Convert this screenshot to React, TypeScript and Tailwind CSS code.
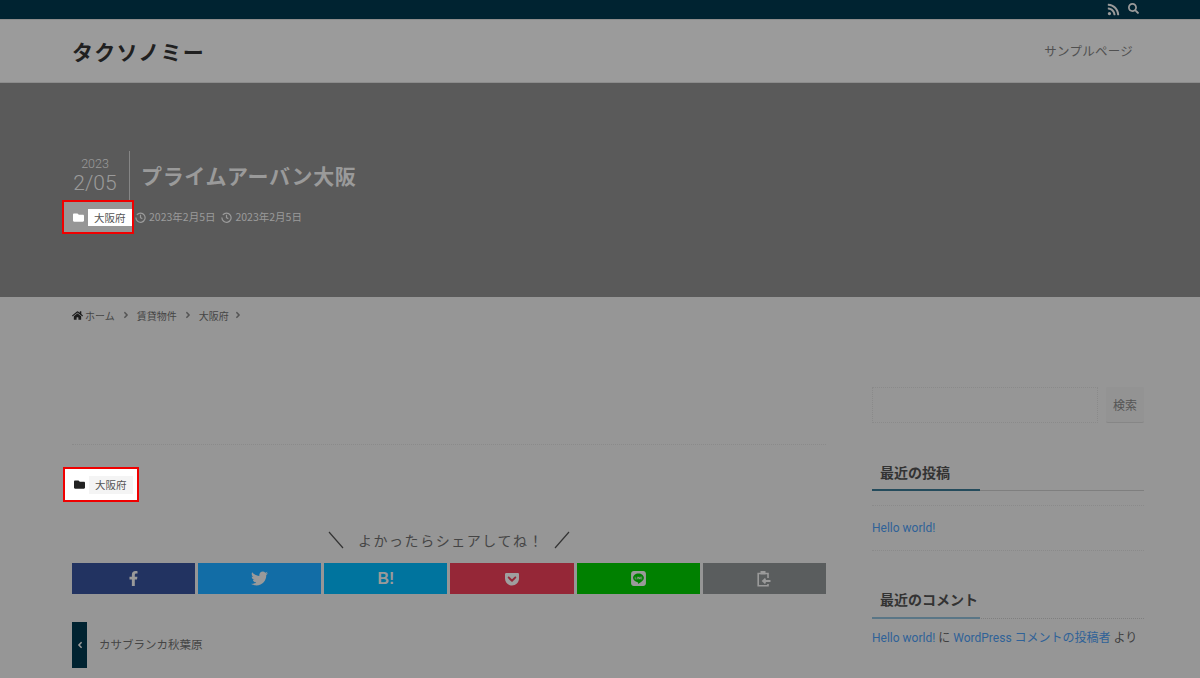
import { FaRss, FaSearch, FaFolder, FaHome, FaFacebookF, FaTwitter, FaGetPocket, FaLine, FaAngleRight, FaAngleLeft } from "react-icons/fa";
import { FiClock } from "react-icons/fi";

const jp = "font-['Noto_Sans_CJK_JP','Noto_Sans',sans-serif]";

function Clock() {
  return (
    <svg width="11" height="11" viewBox="0 0 12 12" fill="none" stroke="currentColor" strokeWidth="1.3">
      <path d="M2 3.2A5 5 0 1 1 1 6" />
      <path d="M6 3v3.2l2 1" />
    </svg>
  );
}

function ClipIcon() {
  return (
    <svg width="14" height="17" viewBox="0 0 14 17" fill="none" stroke="#9a9a9a" strokeWidth="1.6">
      <path d="M11 8V3.5H1.2v12.3H11V14" />
      <rect x="3.5" y="1" width="5" height="3.4" fill="#9a9a9a" stroke="none" />
      <path d="M13.5 11H6.5M8.5 8.6 6 11l2.5 2.4" strokeWidth="1.8" />
    </svg>
  );
}

const social = [
  { bg: "bg-[#223361]", el: <FaFacebookF size={15} color="#9a9a9a" /> },
  { bg: "bg-[#126da6]", el: <FaTwitter size={17} color="#9a9a9a" /> },
  { bg: "bg-[#00749e]", el: <span className="font-['Liberation_Sans',sans-serif] text-[16px] font-bold leading-none text-[#9a9a9a]">B!</span> },
  { bg: "bg-[#952737]", el: <FaGetPocket size={16} color="#9f9f9f" /> },
  { bg: "bg-[#008000]", el: <FaLine size={17} color="#9a9a9a" /> },
  { bg: "bg-[#5a5d5e]", el: <ClipIcon /> },
];

export default function App() {
  return (
    <div className={`${jp} h-[678px] w-[1200px] overflow-hidden bg-[#969696] text-[#3a3a3a]`}>
      <div className="flex h-[19px] items-center justify-end gap-[8px] bg-[#002331] pr-[61px] text-[#9a9a9a]">
        <FaRss size={13} />
        <FaSearch size={11} className="-mt-[3px]" />
      </div>

      <header className="flex h-[64px] items-center justify-between border-y border-[#8c8c8c] bg-[#9b9b9b] pl-[72px] pr-[67px]">
        <div className="text-[21px] font-bold leading-none tracking-[0.06em] text-[#202020]">タクソノミー</div>
        <div className="text-[12.5px] tracking-[0.02em] text-[#505050]">サンプルページ</div>
      </header>

      <section className="h-[214px] bg-[#5a5a5a] pl-[72px] pt-[68px]">
        <div className="flex h-[49px] items-stretch">
          <div className="flex w-[46px] flex-col items-center font-['Roboto',sans-serif] font-light text-[#9a9a9a]">
            <div className="mt-[6px] text-[12.5px] leading-[14px]">2023</div>
            <div className="text-[21px] leading-[24px]">2/05</div>
          </div>
          <div className="ml-[11px] w-px bg-[#858585]" />
          <div className="ml-[11px] pt-[9px] text-[21px] font-bold leading-[30px] tracking-[0.03em] text-[#9a9a9a]">プライムアーバン大阪</div>
        </div>
        <div className="flex h-[34px] items-center">
          <div className="-ml-[10px] flex h-[34px] w-[72px] items-center border-2 border-[#f00000] bg-[#969696] pl-[9px]">
            <FaFolder size={11} color="#ffffff" />
            <span className="ml-[4px] bg-white px-[6px] text-[10.5px] leading-[17px] text-[#555555]">大阪府</span>
          </div>
          <div className="flex items-center gap-[3px] pl-[1px] text-[10.5px] text-[#9a9a9a]">
            <Clock />
            <span>2023年2月5日</span>
          </div>
          <div className="ml-[6px] flex items-center gap-[3px] text-[10.5px] text-[#9a9a9a]">
            <Clock />
            <span>2023年2月5日</span>
          </div>
        </div>
      </section>

      <nav className="flex h-[36px] items-center pl-[72px] text-[10px] text-[#454545]">
        <FaHome size={11} color="#1c1c1c" />
        <span className="ml-[2px]">ホーム</span>
        <FaAngleRight size={10} className="mx-[6px]" color="#555555" />
        <span>賃貸物件</span>
        <FaAngleRight size={10} className="mx-[6px]" color="#555555" />
        <span>大阪府</span>
        <FaAngleRight size={10} className="ml-[4px]" color="#555555" />
      </nav>

      <div className="flex pl-[72px]">
        <main className="w-[754px]">
          <div className="mt-[111px] border-t border-dotted border-[#8a8a8a]" />
          <div className="-ml-[9px] mt-[22px] flex h-[35px] w-[76px] items-center border-2 border-[#f00000] bg-white pl-[9px]">
            <FaFolder size={11} color="#222222" />
            <span className="ml-[4px] bg-[#f4f4f4] px-[6px] text-[10.5px] leading-[18px] text-[#555555]">大阪府</span>
          </div>
          <div className="mt-[24px] flex h-[28px] items-center justify-center text-[14px] tracking-[0.11em] text-[#454545]">
            <svg width="16" height="18" viewBox="0 0 16 18" stroke="#333333" strokeWidth="1.2" className="mr-[14px]">
              <path d="M1 1 15 17" />
            </svg>
            <span>よかったらシェアしてね！</span>
            <svg width="16" height="18" viewBox="0 0 16 18" stroke="#333333" strokeWidth="1.2" className="ml-[10px]">
              <path d="M15 1 1 17" />
            </svg>
          </div>
          <div className="mt-[9px] grid h-[31px] grid-cols-6 gap-[3px]">
            {social.map((s, i) => (
              <div key={i} className={`flex items-center justify-center ${s.bg}`}>{s.el}</div>
            ))}
          </div>
          <div className="mt-[28px] flex items-center">
            <div className="flex h-[46px] w-[15px] items-center justify-center bg-[#002331]">
              <FaAngleLeft size={10} color="#9a9a9a" />
            </div>
            <span className="ml-[12px] text-[11.5px] text-[#454545]">カサブランカ秋葉原</span>
          </div>
        </main>

        <aside className="ml-[46px] w-[272px]">
          <div className="mt-[54px] flex h-[36px] gap-[8px]">
            <div className="w-[226px] border border-dotted border-[#8a8a8a]" />
            <div className="flex w-[38px] items-center justify-center rounded-[2px] border-b border-[#868686] bg-[#939393] text-[12px] text-[#555555]">検索</div>
          </div>
          <div className="mt-[39px] border-b border-[#7f7f7f] pb-[7px] pl-[8px] text-[14px] font-bold leading-[21px] text-[#333333] relative">
            最近の投稿
            <div className="absolute -bottom-px left-0 h-[2px] w-[108px] bg-[#244b5c]" />
          </div>
          <div className="mt-[14px] border-y border-dotted border-[#8a8a8a] py-[14px] text-[12px] leading-[16px] text-[#2f6298] font-['Roboto','Noto_Sans_CJK_JP',sans-serif]">Hello world!</div>
          <div className="relative mt-[38px] border-b border-dotted border-[#7f7f7f] pb-[8px] pl-[8px] text-[14px] font-bold leading-[21px] text-[#333333]">
            最近のコメント
            <div className="absolute -bottom-px left-0 h-[2px] w-[108px] bg-[#5a7686]" />
          </div>
          <div className="mt-[12px] text-[12px] leading-[15px] text-[#3f3f3f] font-['Roboto','Noto_Sans_CJK_JP',sans-serif]">
            <span className="text-[#2f6298]">Hello world!</span> に <span className="text-[#2f6298]">WordPress コメントの投稿者</span> より
          </div>
        </aside>
      </div>
    </div>
  );
}
